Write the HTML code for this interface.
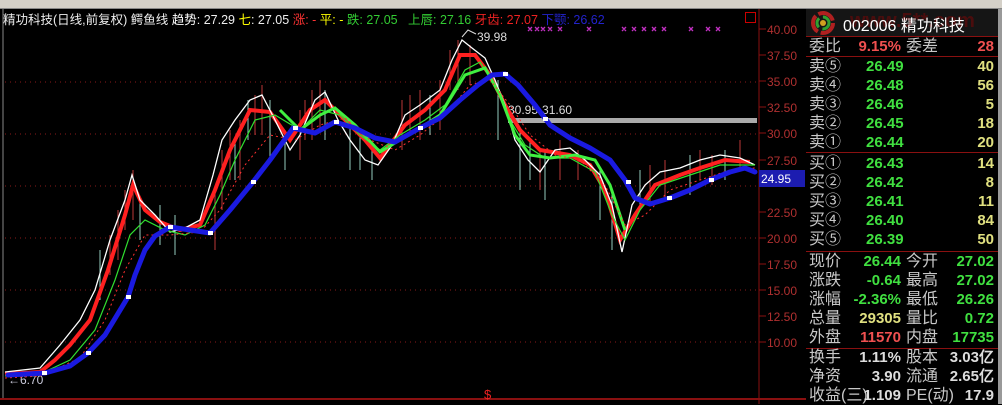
<!DOCTYPE html>
<html><head><meta charset="utf-8"><style>
body{margin:0;width:1002px;height:404px;overflow:hidden;background:#000;font-family:"Liberation Sans","Noto Sans CJK SC",sans-serif;position:relative}
.top{position:absolute;left:0;top:0;width:1002px;height:8px;background:#d4d0c8;border-bottom:1px solid #888}
.t{position:absolute;white-space:nowrap}
.p{position:absolute;left:806px;width:192px;color:#ccc;font-size:16px}
.row{position:absolute;left:0;width:192px;height:19px;line-height:19px}
.l{position:absolute;left:3px;color:#c8c8c8;font-size:16px}
.n{position:absolute;font-weight:bold;font-size:15px;font-family:"Liberation Sans",sans-serif}
.hr{position:absolute;left:806px;width:192px;height:1px;background:#8a1010}
</style></head><body>
<div class="top"></div>
<div class="t" style="left:3px;top:9px;font-size:12.5px;color:#eee">精功科技(日线,前复权) 鳄鱼线 <span style="color:#fff">趋势</span>: 27.29 <span style="color:#ff0">七</span>: 27.05 <span style="color:#f33">涨: -</span> <span style="color:#ff0">平: -</span> <span style="color:#3c3">跌: 27.05</span></div>
<div class="t" style="left:408px;top:9px;font-size:12.5px"><span style="color:#3c3">上唇: 27.16</span> <span style="color:#e22">牙齿: 27.07</span> <span style="color:#22c">下颚: 26.62</span></div>
<div class="t" style="left:745px;top:12px;width:9px;height:9px;border:1px solid #c00"></div>
<svg width="806" height="404" style="position:absolute;left:0;top:0">
<g stroke="#8a1a1a" stroke-dasharray="1,4" stroke-width="1">
<line x1="5" y1="82" x2="757" y2="82"/><line x1="5" y1="134" x2="757" y2="134"/><line x1="5" y1="186" x2="757" y2="186"/><line x1="5" y1="238" x2="757" y2="238"/><line x1="5" y1="290" x2="757" y2="290"/><line x1="5" y1="342" x2="757" y2="342"/>
</g>
<line x1="3" y1="9" x2="3" y2="400" stroke="#888"/>
<line x1="0" y1="399" x2="806" y2="399" stroke="#8a1010" stroke-width="2"/>
<line x1="759" y1="9" x2="759" y2="404" stroke="#8a1010"/>
<g stroke="#8a1010"><line x1="759" y1="29" x2="766" y2="29"/><line x1="759" y1="55" x2="766" y2="55"/><line x1="759" y1="81" x2="766" y2="81"/><line x1="759" y1="107" x2="766" y2="107"/><line x1="759" y1="133" x2="766" y2="133"/><line x1="759" y1="160" x2="766" y2="160"/><line x1="759" y1="186" x2="766" y2="186"/><line x1="759" y1="212" x2="766" y2="212"/><line x1="759" y1="238" x2="766" y2="238"/><line x1="759" y1="264" x2="766" y2="264"/><line x1="759" y1="290" x2="766" y2="290"/><line x1="759" y1="316" x2="766" y2="316"/><line x1="759" y1="342" x2="766" y2="342"/></g>
<g font-size="12" fill="#b03030" font-family="Liberation Sans">
<text x="767" y="34">40.00</text><text x="767" y="60">37.50</text><text x="767" y="86">35.00</text><text x="767" y="112">32.50</text><text x="767" y="138">30.00</text><text x="767" y="165">27.50</text><text x="767" y="217">22.50</text><text x="767" y="243">20.00</text><text x="767" y="269">17.50</text><text x="767" y="295">15.00</text><text x="767" y="321">12.50</text><text x="767" y="347">10.00</text>
</g>
<rect x="759" y="170" width="46" height="17" fill="#1c1cb0"/>
<text x="761" y="183" font-size="12" fill="#fff">24.95</text>
<rect x="508" y="118" width="249" height="5" fill="#aaa"/>
<text x="508" y="114" font-size="12" fill="#ddd">30.95-31.60</text>
<text x="477" y="41" font-size="12" fill="#ddd">39.98</text>
<polyline points="462,37 468,30 476,34" fill="none" stroke="#ddd"/>
<text x="8" y="384" font-size="12" fill="#ccd">←6.70</text>
<text x="484" y="399" font-size="13" fill="#e22">$</text>
<g stroke="#c030c0" stroke-width="1.3">
<path d="M528,27l4,4m0,-4l-4,4M535,27l4,4m0,-4l-4,4M541,27l4,4m0,-4l-4,4M548,27l4,4m0,-4l-4,4M558,27l4,4m0,-4l-4,4M587,27l4,4m0,-4l-4,4M622,27l4,4m0,-4l-4,4M632,27l4,4m0,-4l-4,4M642,27l4,4m0,-4l-4,4M652,27l4,4m0,-4l-4,4M662,27l4,4m0,-4l-4,4M689,27l4,4m0,-4l-4,4M706,27l4,4m0,-4l-4,4M716,27l4,4m0,-4l-4,4"/>
</g>
<g stroke="#d04040" stroke-width="1" opacity="0.9">
<path d="M110,235v40M118,210v50M125,190v40M133,170v50M215,190v60M222,150v60M230,130v50M240,120v60M255,95v40M262,85v50M300,110v50M305,100v40M312,90v50M320,80v50M402,100v50M410,95v40M420,90v50M440,80v50M450,50v40M458,40v50M470,45v40M540,150v40M560,140v40M578,150v30M650,165v40M665,160v40M700,150v30M712,155v30M740,140v30"/>
</g>
<g stroke="#bfe" stroke-width="1" opacity="0.8">
<path d="M100,250v50M140,200v40M160,205v40M175,215v40M235,140v40M248,100v40M270,100v60M285,130v40M325,90v50M350,120v50M360,130v40M372,150v30M430,95v40M498,80v60M520,130v60M530,140v40M545,150v50M600,170v50M612,190v60M640,170v40M690,155v40M725,150v30"/>
</g>
<polyline fill="none" stroke="#ff2020" stroke-width="4" points="5,374 40,372 55,360 70,345 90,320 108,270 125,215 133,185 145,210 160,222 180,230 200,225 215,190 230,150 250,110 270,112 290,140 310,110 325,100 345,120 365,140 380,158 405,125 425,110 445,90 460,55 475,55 490,75 505,105 520,130 540,150 570,155 590,165 605,190 620,240 635,215 655,185 680,175 700,168 725,160 750,162"/>
<polyline fill="none" stroke="#ffffff" stroke-width="1.3" points="5,372 40,368 60,345 80,320 95,290 110,240 125,200 132,175 140,200 155,215 170,232 185,228 200,220 213,175 222,140 235,120 250,100 262,95 275,120 290,150 300,135 315,100 325,92 338,120 350,140 365,160 378,165 392,145 405,115 420,105 440,90 452,60 462,40 472,48 485,58 495,80 505,105 515,140 528,160 540,172 555,150 570,148 585,160 600,175 612,205 622,252 632,205 645,185 660,172 680,168 700,160 720,155 740,158 755,165"/>
<polyline fill="none" stroke="#30e030" stroke-width="1.2" points="5,376 40,374 70,360 95,330 115,280 130,235 145,220 165,230 185,235 205,225 220,195 235,160 255,120 275,115 300,130 320,110 340,115 360,135 380,150 400,135 425,120 445,105 465,70 480,62 495,85 510,120 525,145 545,158 570,158 595,172 612,215 625,240 640,210 660,185 690,175 720,165 755,165"/>
<polyline fill="none" stroke="#40f040" stroke-width="3" points="280,110 300,130 320,115 335,108 355,125 380,152 400,140 420,128 440,115 465,75 485,68 500,95 515,135 530,155 550,158 575,155 595,160 610,185 625,230"/>
<polyline fill="none" stroke="#ff3030" stroke-width="1" stroke-dasharray="2,3" points="5,378 40,376 80,358 105,320 125,270 145,235 170,235 200,232 220,210 245,165 270,135 295,140 320,125 345,118 370,140 395,150 420,135 445,115 470,85 490,80 510,105 530,135 555,155 580,160 605,185 625,225 645,215 670,190 700,180 730,170 755,168"/>
<polyline fill="none" stroke="#1a1ae0" stroke-width="5" stroke-linecap="round" stroke-linejoin="round" points="8,375 45,373 70,366 88,353 105,335 128,297 135,275 145,250 155,236 170,227 190,230 210,233 230,210 253,182 270,160 293,128 315,133 335,122 355,128 375,138 395,142 420,128 440,118 460,100 478,85 492,75 505,74 518,85 535,105 550,125 570,138 590,148 610,160 625,180 635,198 650,204 670,198 690,190 710,180 730,172 745,168 755,172"/>
<g fill="#fff"><rect x="42" y="371" width="5" height="4"/><rect x="86" y="351" width="5" height="4"/><rect x="126" y="295" width="5" height="4"/><rect x="168" y="225" width="5" height="4"/><rect x="208" y="231" width="5" height="4"/><rect x="251" y="180" width="5" height="4"/><rect x="293" y="126" width="5" height="4"/><rect x="334" y="120" width="5" height="4"/><rect x="418" y="126" width="5" height="4"/><rect x="503" y="72" width="5" height="4"/><rect x="543" y="117" width="5" height="4"/><rect x="626" y="180" width="5" height="4"/><rect x="667" y="196" width="5" height="4"/><rect x="709" y="178" width="5" height="4"/></g>
</svg>
<div class="t" style="left:806px;top:9px;width:192px;height:27px;background:#151515"></div>
<div class="t" style="left:850px;top:10px;font-size:20px;color:#4a0d0d;font-weight:bold">www.5**.com</div>
<svg width="30" height="28" style="position:absolute;left:808px;top:9px"><circle cx="15" cy="14" r="10" fill="none" stroke="#b02020" stroke-width="4" stroke-dasharray="18,3"/><circle cx="15" cy="14" r="6" fill="none" stroke="#30a030" stroke-width="3" stroke-dasharray="10,4"/><circle cx="15" cy="14" r="3" fill="#d0a020"/></svg>
<div class="t" style="left:843px;top:12px;font-size:16px;color:#fff">002006 精功科技</div>
<div class="hr" style="top:36px"></div>
<div class="hr" style="top:56px"></div>
<div class="hr" style="top:152px"></div>
<div class="hr" style="top:251px"></div>
<div class="hr" style="top:348px"></div>
<div class="t" style="left:998px;top:9px;width:4px;height:395px;background:#999"></div>
<div class="p" style="top:36px;height:368px">
<div class="row" style="top:1px"><span class="l">委比</span><span class="n" style="right:97px;color:#f05050">9.15%</span><span class="l" style="left:100px">委差</span><span class="n" style="right:4px;color:#f05050">28</span></div>
<div class="row" style="top:21px"><span class="l">卖⑤</span><span class="n" style="left:60px;color:#40e040">26.49</span><span class="n" style="right:4px;color:#e0e080">40</span></div>
<div class="row" style="top:40px"><span class="l">卖④</span><span class="n" style="left:60px;color:#40e040">26.48</span><span class="n" style="right:4px;color:#e0e080">56</span></div>
<div class="row" style="top:59px"><span class="l">卖③</span><span class="n" style="left:60px;color:#40e040">26.46</span><span class="n" style="right:4px;color:#e0e080">5</span></div>
<div class="row" style="top:78px"><span class="l">卖②</span><span class="n" style="left:60px;color:#40e040">26.45</span><span class="n" style="right:4px;color:#e0e080">18</span></div>
<div class="row" style="top:97px"><span class="l">卖①</span><span class="n" style="left:60px;color:#40e040">26.44</span><span class="n" style="right:4px;color:#e0e080">20</span></div>
<div class="row" style="top:118px"><span class="l">买①</span><span class="n" style="left:60px;color:#40e040">26.43</span><span class="n" style="right:4px;color:#e0e080">14</span></div>
<div class="row" style="top:137px"><span class="l">买②</span><span class="n" style="left:60px;color:#40e040">26.42</span><span class="n" style="right:4px;color:#e0e080">8</span></div>
<div class="row" style="top:156px"><span class="l">买③</span><span class="n" style="left:60px;color:#40e040">26.41</span><span class="n" style="right:4px;color:#e0e080">11</span></div>
<div class="row" style="top:175px"><span class="l">买④</span><span class="n" style="left:60px;color:#40e040">26.40</span><span class="n" style="right:4px;color:#e0e080">84</span></div>
<div class="row" style="top:194px"><span class="l">买⑤</span><span class="n" style="left:60px;color:#40e040">26.39</span><span class="n" style="right:4px;color:#e0e080">50</span></div>
<div class="row" style="top:216px"><span class="l">现价</span><span class="n" style="right:97px;color:#40e040">26.44</span><span class="l" style="left:100px">今开</span><span class="n" style="right:4px;color:#40e040">27.02</span></div>
<div class="row" style="top:235px"><span class="l">涨跌</span><span class="n" style="right:97px;color:#40e040">-0.64</span><span class="l" style="left:100px">最高</span><span class="n" style="right:4px;color:#40e040">27.02</span></div>
<div class="row" style="top:254px"><span class="l">涨幅</span><span class="n" style="right:97px;color:#40e040">-2.36%</span><span class="l" style="left:100px">最低</span><span class="n" style="right:4px;color:#40e040">26.26</span></div>
<div class="row" style="top:273px"><span class="l">总量</span><span class="n" style="right:97px;color:#e0e080">29305</span><span class="l" style="left:100px">量比</span><span class="n" style="right:4px;color:#40e040">0.72</span></div>
<div class="row" style="top:292px"><span class="l">外盘</span><span class="n" style="right:97px;color:#f05050">11570</span><span class="l" style="left:100px">内盘</span><span class="n" style="right:4px;color:#40e040">17735</span></div>
<div class="row" style="top:312px"><span class="l">换手</span><span class="n" style="right:97px;color:#ddd">1.11%</span><span class="l" style="left:100px">股本</span><span class="n" style="right:4px;color:#ddd">3.03亿</span></div>
<div class="row" style="top:331px"><span class="l">净资</span><span class="n" style="right:97px;color:#ddd">3.90</span><span class="l" style="left:100px">流通</span><span class="n" style="right:4px;color:#ddd">2.65亿</span></div>
<div class="row" style="top:350px"><span class="l">收益(三)</span><span class="n" style="right:97px;color:#ddd">1.109</span><span class="l" style="left:100px">PE(动)</span><span class="n" style="right:4px;color:#ddd">17.9</span></div>
</div>
</body></html>
